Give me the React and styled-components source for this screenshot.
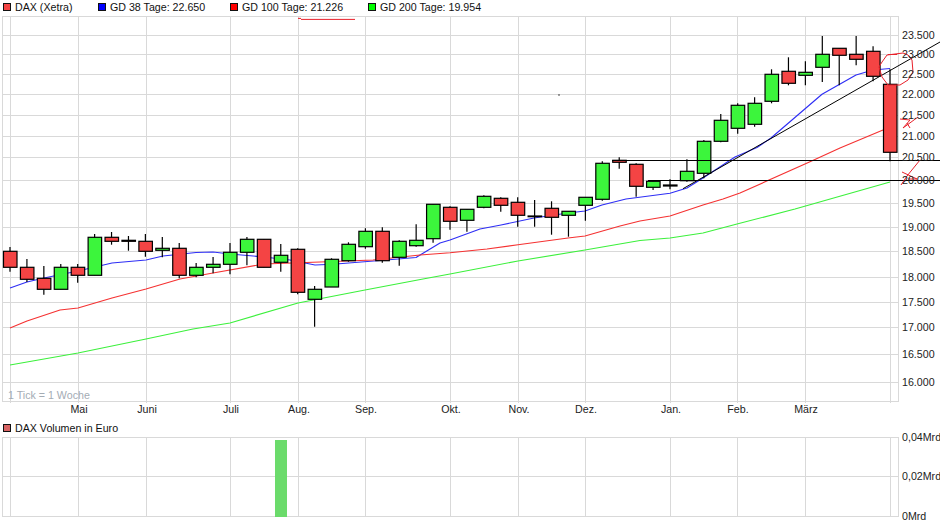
import React from 'react';
import styled, { createGlobalStyle } from 'styled-components';

const GlobalStyle = createGlobalStyle`
  html, body {
    margin: 0;
    padding: 0;
    background: #fff;
  }
`;

const Page = styled.div`
  width: 940px;
  height: 526px;
  overflow: hidden;
  display: flex;
  flex-direction: column;
  background: #fff;
  font-family: "Liberation Sans", Arial, sans-serif;
  font-size: 10.67px;
  color: #111;
`;

const Legend = styled.div`
  display: flex;
  align-items: flex-start;
  box-sizing: border-box;
  height: 16px;
  padding: ${({ $top }) => $top}px 0 0 3px;
`;

const LegendItem = styled.div`
  display: flex;
  align-items: center;
  gap: 4px;
  width: ${({ $width }) => ($width ? `${$width}px` : 'auto')};
  line-height: 12px;
  white-space: nowrap;
`;

const Swatch = styled.span`
  width: 6px;
  height: 6px;
  border: 1px solid #111;
  background: ${({ $color }) => $color};
`;

const Chart = styled.svg`
  display: block;
  flex: none;
  width: 940px;
  height: ${({ $height }) => $height}px;
  overflow: visible;
`;

const GridLine = styled.line`
  stroke: #d9d9d9;
  stroke-width: 1;
`;

const AverageLine = styled.polyline`
  fill: none;
  stroke: ${({ $color }) => $color};
  stroke-width: 1.15;
  stroke-linejoin: round;
`;

const Wick = styled.line`
  stroke: #000;
  stroke-width: 1.2;
`;

const Body = styled.rect`
  fill: ${({ $color }) => $color};
  stroke: #000;
  stroke-width: 1.2;
`;

const DrawnLine = styled.polyline`
  fill: none;
  stroke: #000;
  stroke-width: 1;
`;

const RedMark = styled.polyline`
  fill: none;
  stroke: #e8202a;
  stroke-width: 1;
`;

const AxisText = styled.text`
  font-family: "Liberation Sans", Arial, sans-serif;
  font-size: 10.67px;
  fill: #222;
  text-anchor: ${({ $anchor }) => $anchor || 'start'};
`;

const TickNote = styled.text`
  font-family: "Liberation Sans", Arial, sans-serif;
  font-size: 10.67px;
  fill: #a4acb4;
`;

const VolumeBar = styled.rect`
  fill: #6bdb6b;
`;

const RED = '#f44444';
const GREEN = '#3cf53c';

const verticals = [10, 78, 146, 230, 298, 365, 450, 518, 585, 670, 737, 805, 890];
const months = [
  ['Mai', 78], ['Juni', 146], ['Juli', 230], ['Aug.', 298], ['Sep.', 365], ['Okt.', 450],
  ['Nov.', 518], ['Dez.', 585], ['Jan.', 670], ['Feb.', 737], ['März', 805],
];
const prices = [
  ['23.500', 35], ['23.000', 54], ['22.500', 74], ['22.000', 94], ['21.500', 115], ['21.000', 136],
  ['20.500', 157], ['20.000', 180], ['19.500', 203], ['19.000', 227], ['18.500', 251], ['18.000', 277],
  ['17.500', 302], ['17.000', 327], ['16.500', 354], ['16.000', 382],
];

// high, body top, body bottom, low, up/down
const candles = [
  [247, 251.3, 267.3, 271.7, 0], [259, 267.3, 279.3, 282, 0], [266, 278.3, 289.3, 294.7, 0],
  [264, 267.3, 289.3, 289.3, 1], [264, 267.3, 275.3, 282.7, 0], [234, 237.3, 275.3, 275.3, 1],
  [232, 237.3, 241.3, 244.7, 0], [236, 240.3, 241.3, 250.7, 0], [234, 241.3, 251.3, 256.7, 0],
  [237, 248.3, 250.3, 257.3, 1], [243, 248.3, 275.3, 278.3, 0], [263, 267.3, 275.3, 277.3, 1],
  [257, 264.3, 267.3, 273.3, 1], [243, 252.3, 264.3, 274.3, 1], [237, 239.3, 252.3, 265.3, 1],
  [239.3, 239.3, 267.3, 267.3, 0], [244, 255.3, 262.3, 271.7, 1], [248.3, 249.3, 292.3, 294.3, 0],
  [286, 289.3, 299.3, 326.7, 1], [258.3, 259.3, 287, 287, 1], [242.3, 244.3, 260.7, 261.7, 1],
  [228.3, 231.3, 246.7, 248.7, 1], [227.3, 231.3, 260.7, 262.7, 0], [240.3, 241.3, 257.3, 265.7, 1],
  [224.3, 240.3, 245.7, 246.7, 1], [204.3, 204.3, 238.7, 242.7, 1], [206.3, 207.3, 221.3, 229.7, 0],
  [209.3, 209.3, 220.3, 231.7, 1], [195.3, 196.3, 207.3, 208.3, 1], [197.3, 198.3, 205.3, 211.7, 0],
  [197.3, 202.3, 215.3, 226.7, 0], [200, 216, 216.7, 226.7, 0], [201.3, 208.3, 217.3, 234.7, 0],
  [211.3, 211.3, 215.3, 236.7, 1], [197.3, 197.3, 205.3, 220.7, 1], [161.3, 163.3, 199.3, 200.7, 1],
  [157.3, 160.3, 162.3, 168.7, 0], [163.3, 164.3, 186.3, 196.7, 0], [181.3, 181.3, 187.3, 190, 1],
  [179.3, 185, 186, 189.3, 0], [159.3, 171.3, 180.7, 181.7, 1], [140, 141.3, 173.3, 178.3, 1],
  [114, 120.3, 141.3, 142.3, 1], [103.3, 105.3, 128.3, 133.7, 1], [97.3, 103.3, 124.3, 126.7, 1],
  [69.3, 74.3, 101.3, 103.3, 1], [57.3, 71.3, 83.3, 85.3, 0], [61.3, 72.3, 75.3, 85.3, 1],
  [36, 54.3, 67.3, 82, 1], [48.3, 48.3, 55.3, 85.3, 0], [36, 54.3, 59.3, 65.3, 0],
  [46.3, 51.3, 76.3, 81.3, 0], [69.3, 84.3, 152.3, 161.3, 0],
];

const gd38 = '10,288 27,282 44,278 78,271 112,263 146,260 163,256 196,252.5 213,252 230,254 264,257 290,260 315,265 333,264.3 380,260.5 416,257.5 440,243 450,240 480,229 501,225 534,218 568,213 585,211 602,205 626,199 670,193.3 687,188 703,178 735,157 757,147.5 771,138 822,94.3 856,75 873,70 890,68.5';
const gd100 = '10,328 27,321 60,310 78,308 112,298 146,289 180,279 213,273 264,264 320,262 373,260 420,255 450,252.7 487,249 518,244.7 568,238 585,236 620,226 640,221 670,216 703,205 723,199 740,193 810,161.7 840,148 883,130';
const gd200 = '10,365 78,353 146,339 193,329 230,323 298,303 365,290 423,279 450,274 518,261 585,250 640,240.5 670,238 703,233 737,224 795,209 890,182';

const circle = '887,55 903,53 908,55 912,60 913,72 908,80 900,85 888,85 882,77 879,67 882,62 887,55';

const candleX = (i) => 10 + i * 16.923;

const App = () => (
  <Page>
    <GlobalStyle />
    <Legend $top={1}>
      <LegendItem $width={95}><Swatch $color="#f44444" />DAX (Xetra)</LegendItem>
      <LegendItem $width={132}><Swatch $color="#0000ff" />GD 38 Tage: 22.650</LegendItem>
      <LegendItem $width={138}><Swatch $color="#ff0000" />GD 100 Tage: 21.226</LegendItem>
      <LegendItem><Swatch $color="#00ff00" />GD 200 Tage: 19.954</LegendItem>
    </Legend>

    <Chart $height={404} viewBox="0 16 940 404">
      <GridLine x1="2.5" x2="2.5" y1="16" y2="402" />
      <GridLine x1="898.5" x2="898.5" y1="16" y2="402" />
      <GridLine x1="2" x2="899" y1="16.5" y2="16.5" />
      <GridLine x1="2" x2="899" y1="401.5" y2="401.5" />
      {verticals.map((x) => (
        <GridLine key={x} x1={x + 0.5} x2={x + 0.5} y1="16" y2="403" />
      ))}
      {prices.map(([label, y]) => (
        <GridLine key={label} x1="2" x2="899" y1={y + 0.5} y2={y + 0.5} />
      ))}

      <AverageLine $color="#2e2ef5" points={gd38} />
      <AverageLine $color="#f53232" points={gd100} />
      <AverageLine $color="#3cf03c" points={gd200} />

      {candles.map(([high, top, bottom, low, up], i) => (
        <g key={i}>
          <Wick x1={candleX(i)} x2={candleX(i)} y1={high} y2={low} />
          <Body
            $color={up ? GREEN : RED}
            x={candleX(i) - 6.5}
            y={top}
            width="13.5"
            height={bottom - top}
          />
        </g>
      ))}

      <DrawnLine points="612,160.5 940,160.5" />
      <DrawnLine points="648,180.5 940,180.5" />
      <DrawnLine points="683,188.7 940,42" />

      <RedMark points="298,18.4 301,18.4" />
      <RedMark points="301,19.4 355,19.4" />
      <RedMark points={circle} />
      <RedMark points="888,54.5 897,54.5" />
      <RedMark points="900,119 910,120 903,128 918,117" />
      <RedMark points="907,123 910,128" />
      <RedMark points="901,185 907,176 920,160" />
      <RedMark points="902,172 917,179 908,179" />
      <circle cx="559" cy="95" r="0.7" fill="#000" />

      {prices.map(([label, y]) => (
        <AxisText key={label} x="902" y={y + 4}>{label}</AxisText>
      ))}
      {months.map(([label, x]) => (
        <AxisText key={label} $anchor="middle" x={x + 1} y="413">{label}</AxisText>
      ))}
      <TickNote x="8" y="399">1 Tick = 1 Woche</TickNote>
    </Chart>

    <Legend $top={2}>
      <LegendItem><Swatch $color="#d96464" />DAX Volumen in Euro</LegendItem>
    </Legend>

    <Chart $height={90} viewBox="0 436 940 90">
      <GridLine x1="2.5" x2="2.5" y1="437" y2="517" />
      <GridLine x1="898.5" x2="898.5" y1="437" y2="517" />
      <GridLine x1="2" x2="899" y1="437.5" y2="437.5" />
      <GridLine x1="2" x2="899" y1="476.5" y2="476.5" />
      <GridLine x1="2" x2="899" y1="516.5" y2="516.5" />
      {verticals.map((x) => (
        <GridLine key={x} x1={x + 0.5} x2={x + 0.5} y1="437" y2="517" />
      ))}
      <VolumeBar x="275" y="440" width="12" height="77" />
      <AxisText x="902" y="441">0,04Mrd</AxisText>
      <AxisText x="902" y="480">0,02Mrd</AxisText>
      <AxisText x="902" y="520">0Mrd</AxisText>
    </Chart>
  </Page>
);

export default App;
